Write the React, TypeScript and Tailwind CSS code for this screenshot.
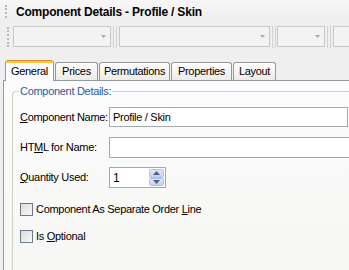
import React from "react";

function Gripper({ h }: { h: string }) {
  return <div className={`w-[2px] ${h} border-l-2 border-dotted border-[#b8b8b8]`} />;
}

function Combo({ w }: { w: string }) {
  return (
    <div className={`${w} shrink-0 h-[21px] border border-[#c8c8c8] bg-[#f3f3f3] flex items-center justify-end pr-[4px]`}>
      <svg width="5" height="3" viewBox="0 0 5 3">
        <path d="M0 0h5L2.5 3z" fill="#a9a9a9" />
      </svg>
    </div>
  );
}

function Sep({ w }: { w: string }) {
  return (
    <div className={`flex h-[22px] ${w} shrink-0 justify-center gap-[2px]`}>
      <div className="w-[1px] h-full bg-[#d2d2d2]" />
      <div className="w-[1px] h-full bg-[#d2d2d2]" />
    </div>
  );
}

function Tab({ label, w }: { label: React.ReactNode; w: string }) {
  return (
    <div
      className={`${w} shrink-0 h-[18px] ml-[1px] border border-b-0 border-[#919b9c] rounded-t-[3px] bg-gradient-to-b from-[#fefefe] to-[#ecebe5] flex items-center justify-center text-[11px] text-black`}
    >
      {label}
    </div>
  );
}

function Check({ children }: { children: React.ReactNode }) {
  return (
    <div className="flex items-center h-[13px]">
      <div className="w-[13px] h-[13px] shrink-0 border border-[#6b7a90] bg-gradient-to-br from-[#dcdcd6] to-[#f8f8f6]" />
      <div className="ml-[3px] text-[11px] text-black leading-none whitespace-nowrap">{children}</div>
    </div>
  );
}

export default function App() {
  return (
    <div className="w-[349px] h-[270px] overflow-hidden bg-[#efefef] flex flex-col font-['Liberation_Sans',Arial,sans-serif] tracking-[-0.3px]">
      {/* title */}
      <div className="h-[23px] shrink-0 flex items-center bg-gradient-to-b from-[#f7f7f7] to-[#eeeeee]">
        <div className="ml-[5px]">
          <Gripper h="h-[13px]" />
        </div>
        <div className="ml-[9px] text-[12px] font-bold text-black tracking-[-0.2px] whitespace-nowrap">
          Component Details - Profile / Skin
        </div>
      </div>
      {/* toolbar */}
      <div className="h-[27px] shrink-0 flex items-center">
        <div className="ml-[7px] mr-[4px] shrink-0">
          <Gripper h="h-[20px]" />
        </div>
        <Combo w="w-[98px]" />
        <Sep w="w-[8px]" />
        <Combo w="w-[151px]" />
        <Sep w="w-[7px]" />
        <Combo w="w-[48px]" />
        <Sep w="w-[8px]" />
        <Combo w="w-[40px]" />
      </div>
      {/* tabs */}
      <div className="mt-[10px] h-[20px] shrink-0 flex items-end pl-[5px] relative z-10">
        <div className="w-[49px] shrink-0 h-[21px] -mb-[1px] border-x border-[#919b9c] rounded-t-[3px] bg-[#fcfcfe] flex flex-col">
          <div className="h-[1px] mx-[1px] bg-[#e68b2c]" />
          <div className="h-[2px] bg-[#ffc73c]" />
          <div className="flex-1 flex items-center justify-center text-[11px] text-black pb-[1px]">General</div>
        </div>
        <Tab label="Prices" w="w-[43px]" />
        <Tab label="Permutations" w="w-[71px]" />
        <Tab label="Properties" w="w-[61px]" />
        <Tab label="Layout" w="w-[43px]" />
      </div>
      {/* panel */}
      <div className="ml-[3px] flex-1 border-l border-t border-[#919b9c] bg-gradient-to-b from-[#fcfcfe] to-[#f6f6f3] flex flex-col">
        <div className="mt-[10px] ml-[8px] flex-1 border-l border-t border-[#d0d0bf] rounded-tl-[4px] relative flex flex-col pl-[7px]">
          <div className="absolute -top-[7px] left-[6px] px-[1px] bg-[#fcfcfe] text-[11px] leading-[13px] text-[#2f5aa0] whitespace-nowrap">
            Component Details:
          </div>
          {/* row 1 */}
          <div className="mt-[15px] flex items-center">
            <div className="w-[89px] shrink-0 text-[11px] text-black whitespace-nowrap">
              <u className="underline-offset-[1px]">C</u>omponent Name:
            </div>
            <div className="w-[239px] shrink-0 h-[20px] border border-[#a3a9b1] bg-white flex items-center pl-[3px] text-[11px] text-black">
              Profile / Skin
            </div>
          </div>
          {/* row 2 */}
          <div className="mt-[10px] flex items-center">
            <div className="w-[89px] shrink-0 text-[11px] text-black whitespace-nowrap">
              HT<u className="underline-offset-[1px]">M</u>L for Name:
            </div>
            <div className="w-[260px] shrink-0 h-[21px] border border-[#a3a9b1] bg-white" />
          </div>
          {/* row 3 */}
          <div className="mt-[9px] flex items-center">
            <div className="w-[89px] shrink-0 text-[11px] text-black whitespace-nowrap">
              <u className="underline-offset-[1px]">Q</u>uantity Used:
            </div>
            <div className="w-[57px] shrink-0 h-[21px] border border-[#a3a9b1] bg-white flex">
              <div className="flex-1 flex items-center pl-[3px] text-[12px] text-black">1</div>
              <div className="w-[16px] flex flex-col py-[1px] pr-[1px]">
                <div className="flex-1 border border-[#b2c3e8] rounded-[2px] bg-gradient-to-b from-[#dfe7fb] to-[#c3d1f3] flex items-center justify-center">
                  <svg width="7" height="4" viewBox="0 0 7 4">
                    <path d="M0 4L3.5 0 7 4z" fill="#4d6185" />
                  </svg>
                </div>
                <div className="flex-1 border border-[#b2c3e8] rounded-[2px] bg-gradient-to-b from-[#dfe7fb] to-[#c3d1f3] flex items-center justify-center">
                  <svg width="7" height="4" viewBox="0 0 7 4">
                    <path d="M0 0h7L3.5 4z" fill="#4d6185" />
                  </svg>
                </div>
              </div>
            </div>
          </div>
          {/* checks */}
          <div className="mt-[15px]">
            <Check>
              Component As Separate Order <u className="underline-offset-[1px]">L</u>ine
            </Check>
          </div>
          <div className="mt-[14px]">
            <Check>
              Is <u className="underline-offset-[1px]">O</u>ptional
            </Check>
          </div>
        </div>
      </div>
    </div>
  );
}
